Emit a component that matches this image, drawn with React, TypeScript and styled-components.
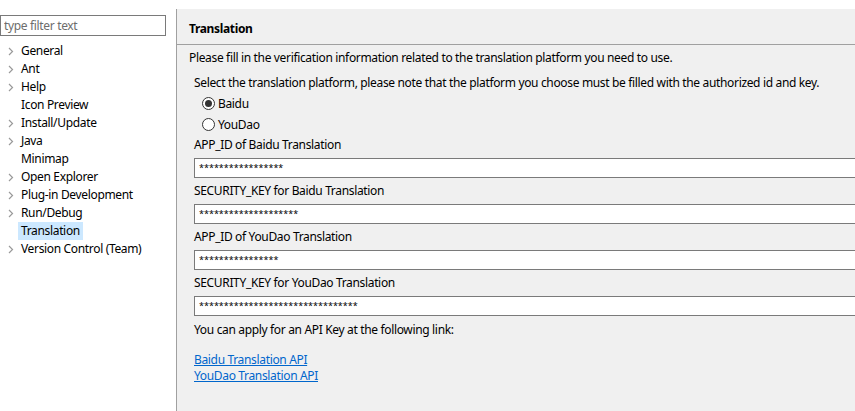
import React from "react";
import styled, { createGlobalStyle } from "styled-components";

const Global = createGlobalStyle`
  html, body { margin: 0; padding: 0; background: #ffffff; }
  body { font-family: "Noto Sans", "Open Sans", sans-serif; font-size: 12px; letter-spacing: -0.34px; color: #000; }
  * { box-sizing: border-box; }
`;

const Root = styled.div`
  display: flex;
  width: 855px;
  height: 411px;
  overflow: hidden;
  background: #ffffff;
`;

const Sidebar = styled.div`
  width: 176px;
  flex: none;
  padding-top: 15px;
  display: flex;
  flex-direction: column;
`;

const Filter = styled.input`
  width: 166px;
  height: 21px;
  margin: 0;
  border: 1px solid #7a7a7a;
  padding: 0 0 1px 3px;
  font: inherit;
  font-size: 12px;
  letter-spacing: -0.34px;
  color: #555;
  outline: none;
  &::placeholder { color: #6d6d6d; }
`;

const Tree = styled.ul`
  list-style: none;
  margin: 6px 0 0 0;
  padding: 0;
`;

const Node = styled.li`
  display: flex;
  align-items: center;
  height: 18px;
  padding-left: 6px;
`;

const Twisty = styled.span`
  width: 12px;
  height: 18px;
  display: flex;
  align-items: center;
  justify-content: flex-start;
  padding-left: 2px;
`;

const Label = styled.span<{ $sel?: boolean }>`
  padding: 0 3px;
  line-height: 18px;
  background: ${(p) => (p.$sel ? "#cce8ff" : "transparent")};
  white-space: nowrap;
`;

const Page = styled.div`
  flex: 1;
  margin-top: 9px;
  background: #f0f0f0;
  border-left: 1px solid #a0a0a0;
  display: flex;
  flex-direction: column;
`;

const Header = styled.div`
  height: 36px;
  border-bottom: 1px solid #a0a0a0;
  padding: 3px 0 0 12px;
  display: flex;
  align-items: center;
  font-weight: bold;
  font-size: 12px;
`;

const Body = styled.div`
  padding: 5px 0 0 12px;
  display: flex;
  flex-direction: column;
`;

const Text = styled.div<{ $mt?: number }>`
  line-height: 16px;
  height: 16px;
  margin-top: ${(p) => p.$mt ?? 0}px;
  white-space: nowrap;
`;

const Group = styled.div`
  padding-left: 5px;
  display: flex;
  flex-direction: column;
  margin-top: 9px;
`;

const RadioRow = styled.label<{ $first?: boolean }>`
  display: flex;
  align-items: center;
  height: 21px;
  padding-left: 8px;
  gap: 3px;
  margin-top: ${(p) => (p.$first ? 2 : 0)}px;
`;

const RadioDot = styled.span<{ $on?: boolean }>`
  width: 13px;
  height: 13px;
  border-radius: 50%;
  border: 1px solid #333;
  background: #fff;
  display: flex;
  align-items: center;
  justify-content: center;
  &::after {
    content: "";
    width: 7px;
    height: 7px;
    border-radius: 50%;
    background: ${(p) => (p.$on ? "#333" : "transparent")};
  }
`;

const Field = styled.div<{ $first?: boolean }>`
  display: flex;
  flex-direction: column;
  gap: 5px;
  margin-top: ${(p) => (p.$first ? 2 : 5)}px;
`;

const Input = styled.div`
  height: 20px;
  border: 1px solid #7a7a7a;
  border-right: none;
  background: #fff;
  padding-left: 4px;
  font-size: 9px;
  line-height: 17px;
  letter-spacing: 0px;
  width: 700px;
  overflow: hidden;
  white-space: nowrap;
`;

const Links = styled.div`
  display: flex;
  flex-direction: column;
  margin-top: 14px;
`;

const Link = styled.a`
  color: #0066cc;
  text-decoration: underline;
  line-height: 16px;
  height: 16px;
  width: max-content;
`;

const Chevron = () => (
  <svg width="6" height="9" viewBox="0 0 6 9">
    <path d="M1 1 L4.5 4.5 L1 8" fill="none" stroke="#9a9a9a" strokeWidth="1.2" />
  </svg>
);

const items: { name: string; kids: boolean; sel?: boolean }[] = [
  { name: "General", kids: true },
  { name: "Ant", kids: true },
  { name: "Help", kids: true },
  { name: "Icon Preview", kids: false },
  { name: "Install/Update", kids: true },
  { name: "Java", kids: true },
  { name: "Minimap", kids: false },
  { name: "Open Explorer", kids: true },
  { name: "Plug-in Development", kids: true },
  { name: "Run/Debug", kids: true },
  { name: "Translation", kids: false, sel: true },
  { name: "Version Control (Team)", kids: true },
];

const fields = [
  { label: "APP_ID of Baidu Translation", value: "*****************" },
  { label: "SECURITY_KEY for Baidu Translation", value: "********************" },
  { label: "APP_ID of YouDao Translation", value: "****************" },
  { label: "SECURITY_KEY for YouDao Translation", value: "********************************" },
];

export default function App() {
  return (
    <>
      <Global />
      <Root>
        <Sidebar>
          <Filter placeholder="type filter text" />
          <Tree>
            {items.map((it) => (
              <Node key={it.name}>
                <Twisty>{it.kids ? <Chevron /> : null}</Twisty>
                <Label $sel={it.sel}>{it.name}</Label>
              </Node>
            ))}
          </Tree>
        </Sidebar>
        <Page>
          <Header>Translation</Header>
          <Body>
            <Text>Please fill in the verification information related to the translation platform you need to use.</Text>
            <Group>
              <Text>Select the translation platform, please note that the platform you choose must be filled with the authorized id and key.</Text>
              <RadioRow $first>
                <RadioDot $on />
                Baidu
              </RadioRow>
              <RadioRow>
                <RadioDot />
                YouDao
              </RadioRow>
              {fields.map((f, i) => (
                <Field key={f.label} $first={i === 0}>
                  <Text>{f.label}</Text>
                  <Input>{f.value}</Input>
                </Field>
              ))}
              <Text $mt={6}>You can apply for an API Key at the following link:</Text>
              <Links>
                <Link href="#">Baidu Translation API</Link>
                <Link href="#">YouDao Translation API</Link>
              </Links>
            </Group>
          </Body>
        </Page>
      </Root>
    </>
  );
}
